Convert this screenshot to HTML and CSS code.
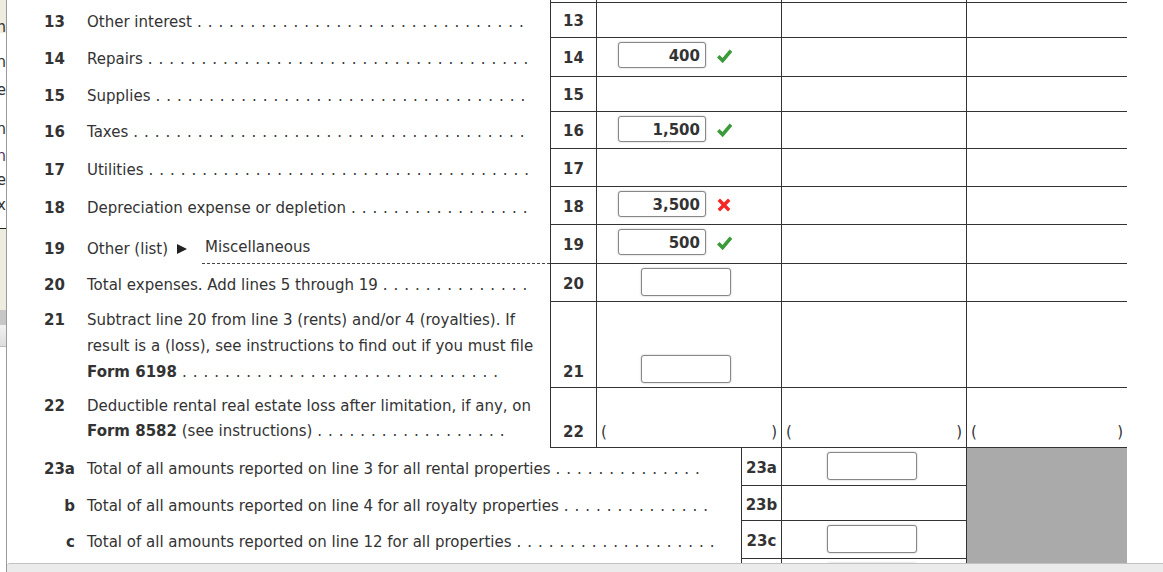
FILE: index.html
```html
<!DOCTYPE html>
<html lang="en">
<head>
<meta charset="utf-8">
<title>Schedule E - Expenses</title>
<link rel="stylesheet" href="styles.css">
</head>
<body>
<div class="page">
  <div class="strip">
    <div class="sb s-top"><div class="frag f0">h</div></div>
    <div class="sb s-white">
      <div class="frag f1">n</div>
      <div class="frag f2">e</div>
      <div class="frag f3">n</div>
      <div class="frag f4">n</div>
      <div class="frag f5">e</div>
      <div class="frag f6">x</div>
    </div>
    <div class="sb s-beige"></div>
    <div class="sb s-gray"></div>
    <div class="sb s-light"></div>
  </div>

  <div class="form">
    <div class="row h3">
      <div class="desc"></div>
      <div class="cell box"></div>
      <div class="cell amt"></div>
      <div class="cell amt"></div>
      <div class="cell last"></div>
    </div>

    <div class="row h35">
      <div class="desc"><span class="num">13</span><span class="txt">Other interest</span><span class="lead">. . . . . . . . . . . . . . . . . . . . . . . . . . . . . . .</span></div>
      <div class="cell box">13</div>
      <div class="cell amt"></div>
      <div class="cell amt"></div>
      <div class="cell last"></div>
    </div>

    <div class="row h39">
      <div class="desc"><span class="num">14</span><span class="txt">Repairs</span><span class="lead">. . . . . . . . . . . . . . . . . . . . . . . . . . . . . . . . . . . .</span></div>
      <div class="cell box">14</div>
      <div class="cell amt fill"><div class="grp"><input class="inp val" type="text" value="400" readonly><svg class="ic" width="15" height="14" viewBox="0 0 15 14"><path class="ok" d="M1.2 7.2 L5.6 11.6 L14 1.6"/></svg></div></div>
      <div class="cell amt"></div>
      <div class="cell last"></div>
    </div>

    <div class="row h35">
      <div class="desc"><span class="num">15</span><span class="txt">Supplies</span><span class="lead">. . . . . . . . . . . . . . . . . . . . . . . . . . . . . . . . . . .</span></div>
      <div class="cell box">15</div>
      <div class="cell amt"></div>
      <div class="cell amt"></div>
      <div class="cell last"></div>
    </div>

    <div class="row h37">
      <div class="desc"><span class="num">16</span><span class="txt">Taxes</span><span class="lead">. . . . . . . . . . . . . . . . . . . . . . . . . . . . . . . . . . . . .</span></div>
      <div class="cell box">16</div>
      <div class="cell amt fill"><div class="grp"><input class="inp val" type="text" value="1,500" readonly><svg class="ic" width="15" height="14" viewBox="0 0 15 14"><path class="ok" d="M1.2 7.2 L5.6 11.6 L14 1.6"/></svg></div></div>
      <div class="cell amt"></div>
      <div class="cell last"></div>
    </div>

    <div class="row h38">
      <div class="desc"><span class="num">17</span><span class="txt">Utilities</span><span class="lead">. . . . . . . . . . . . . . . . . . . . . . . . . . . . . . . . . . . .</span></div>
      <div class="cell box">17</div>
      <div class="cell amt"></div>
      <div class="cell amt"></div>
      <div class="cell last"></div>
    </div>

    <div class="row h38">
      <div class="desc"><span class="num">18</span><span class="txt">Depreciation expense or depletion</span><span class="lead">. . . . . . . . . . . . . . . . .</span></div>
      <div class="cell box">18</div>
      <div class="cell amt fill"><div class="grp"><input class="inp val" type="text" value="3,500" readonly><svg class="ic" width="15" height="14" viewBox="0 0 15 14"><path class="bad" d="M1.8 1.8 L12.2 12.2 M12.2 1.8 L1.8 12.2"/></svg></div></div>
      <div class="cell amt"></div>
      <div class="cell last"></div>
    </div>

    <div class="row h39">
      <div class="desc r19"><span class="num">19</span><span class="txt">Other (list)</span><svg class="tri" width="10" height="10" viewBox="0 0 10 10"><polygon points="0,0 10,5 0,10"/></svg><div class="misc">Miscellaneous</div></div>
      <div class="cell box">19</div>
      <div class="cell amt fill"><div class="grp"><input class="inp val" type="text" value="500" readonly><svg class="ic" width="15" height="14" viewBox="0 0 15 14"><path class="ok" d="M1.2 7.2 L5.6 11.6 L14 1.6"/></svg></div></div>
      <div class="cell amt"></div>
      <div class="cell last"></div>
    </div>

    <div class="row h38">
      <div class="desc"><span class="num">20</span><span class="txt">Total expenses. Add lines 5 through 19</span><span class="lead">. . . . . . . . . . . . . .</span></div>
      <div class="cell box">20</div>
      <div class="cell amt fill empty"><input class="inp blank" type="text" value="" readonly></div>
      <div class="cell amt"></div>
      <div class="cell last"></div>
    </div>

    <div class="row h86">
      <div class="desc multi m21"><span class="num">21</span>
        <div class="lines">
          <div class="ln">Subtract line 20 from line 3 (rents) and/or 4 (royalties). If</div>
          <div class="ln">result is a (loss), see instructions to find out if you must file</div>
          <div class="ln"><span class="txt b">Form 6198</span><span class="lead">. . . . . . . . . . . . . . . . . . . . . . . . . . . . . .</span></div>
        </div>
      </div>
      <div class="cell box bot">21</div>
      <div class="cell amt fill empty bottom"><input class="inp blank" type="text" value="" readonly></div>
      <div class="cell amt"></div>
      <div class="cell last"></div>
    </div>

    <div class="row h60">
      <div class="desc multi m22"><span class="num">22</span>
        <div class="lines">
          <div class="ln">Deductible rental real estate loss after limitation, if any, on</div>
          <div class="ln"><span class="txt"><b>Form 8582</b> (see instructions)</span><span class="lead">. . . . . . . . . . . . . . . . . .</span></div>
        </div>
      </div>
      <div class="cell box bot">22</div>
      <div class="cell amt paren"><span>(</span><span>)</span></div>
      <div class="cell amt paren"><span>(</span><span>)</span></div>
      <div class="cell last paren"><span>(</span><span>)</span></div>
    </div>

    <div class="row h38">
      <div class="desc wide"><span class="num">23a</span><span class="txt">Total of all amounts reported on line 3 for all rental properties</span><span class="lead">. . . . . . . . . . . . . .</span></div>
      <div class="cell box narrow">23a</div>
      <div class="cell amt fill empty colb"><input class="inp blank" type="text" value="" readonly></div>
      <div class="cell last gray"></div>
    </div>

    <div class="row h35">
      <div class="desc wide"><span class="num sub">b</span><span class="txt">Total of all amounts reported on line 4 for all royalty properties</span><span class="lead">. . . . . . . . . . . . . .</span></div>
      <div class="cell box narrow">23b</div>
      <div class="cell amt"></div>
      <div class="cell last gray"></div>
    </div>

    <div class="row h38">
      <div class="desc wide"><span class="num sub">c</span><span class="txt">Total of all amounts reported on line 12 for all properties</span><span class="lead">. . . . . . . . . . . . . . . . . . .</span></div>
      <div class="cell box narrow">23c</div>
      <div class="cell amt fill empty colb"><input class="inp blank" type="text" value="" readonly></div>
      <div class="cell last gray"></div>
    </div>

    <div class="row h40">
      <div class="desc wide"></div>
      <div class="cell box narrow"></div>
      <div class="cell amt fill empty colb"><input class="inp blank" type="text" value="" readonly></div>
      <div class="cell last gray"></div>
    </div>
  </div>
</div>
<div class="hscroll"></div>
</body>
</html>
```

FILE: styles.css
```css
html, body {
  margin: 0;
  padding: 0;
  overflow: hidden;
  background: #fff;
}
body {
  width: 1163px;
  height: 572px;
  font-family: "DejaVu Sans", Verdana, sans-serif;
  font-size: 15px;
  color: #333;
}
.page {
  display: flex;
  align-items: flex-start;
}

/* cut-off side panel */
.strip {
  flex: none;
  width: 6px;
  height: 572px;
  border-right: 1px solid #9a9a9a;
  overflow: hidden;
  display: flex;
  flex-direction: column;
}
.sb { flex: none; overflow: hidden; }
.s-top { height: 33px; background: #eeecdf; }
.s-white { height: 195px; background: #fff; }
.s-beige { height: 82px; box-sizing: border-box; border-top: 1px solid #222; background: #eeecdf; }
.s-gray { height: 15px; background: #c6c6c6; }
.s-light { height: 22px; box-sizing: border-box; background: linear-gradient(#f2f2f2, #dedede); border-bottom: 1px solid #bdbdbd; }
.frag {
  height: 24px;
  line-height: 24px;
  display: flex;
  justify-content: flex-end;
  white-space: nowrap;
  color: #333;
}
.f0 { margin-top: 15px; }
.f1 { margin-top: 17px; }
.f2 { margin-top: 4px; }
.f3 { margin-top: 15px; }
.f4 { margin-top: 3px; color: #5b3566; }
.f5 { margin-top: 0; }
.f6 { margin-top: 1px; }

/* form grid */
.form { flex: none; width: 1156px; }
.row { display: flex; }
.h3 { height: 3px; }
.h35 { height: 35px; }
.h37 { height: 37px; }
.h38 { height: 38px; }
.h39 { height: 39px; }
.h40 { height: 40px; }
.h60 { height: 60px; }
.h86 { height: 86px; }

.desc {
  flex: none;
  width: 543px;
  box-sizing: border-box;
  display: flex;
  align-items: center;
  padding: 3px 8px 0 37px;
  white-space: nowrap;
  line-height: 26px;
}
.desc.wide { width: 734px; padding-top: 4px; }

.num {
  flex: none;
  width: 31px;
  margin-right: 12px;
  font-weight: bold;
}
.num.sub { text-align: right; }
.txt { flex: none; }
.b { font-weight: bold; }
.lead {
  flex: none;
  margin-left: 5px;
  letter-spacing: 0.6px;
}

/* multi-line descriptions */
.desc.multi { align-items: flex-start; }
.m21 { padding-top: 5px; }
.m22 { padding-top: 6px; line-height: 25px; }
.lines { display: flex; flex-direction: column; }
.ln { display: flex; white-space: nowrap; }

/* line 19 */
.desc.r19 {
  align-items: stretch;
  padding: 8px 0 0 37px;
}
.r19 .num, .r19 .txt { align-self: center; }
.tri {
  align-self: center;
  flex: none;
  margin-left: 9px;
  fill: #222;
}
.misc {
  flex: 1;
  margin-left: 15px;
  display: flex;
  align-items: center;
  padding: 0 0 4px 3px;
  background-image: repeating-linear-gradient(90deg, #444 0 3px, transparent 3px 5px);
  background-size: 100% 1px;
  background-repeat: no-repeat;
  background-position: left bottom;
}

/* cells */
.cell {
  flex: none;
  box-sizing: border-box;
  border-left: 1px solid #333;
  border-bottom: 1px solid #333;
  display: flex;
}
.box {
  width: 46px;
  justify-content: center;
  align-items: center;
  padding-top: 2px;
  font-weight: bold;
  line-height: 26px;
}
.box.narrow { width: 40px; padding-top: 3px; }
.box.bot { align-items: flex-end; padding: 0 0 2px 0; }
.amt { width: 185px; }
.last { width: 161px; }
.gray { background: #aaa; border-bottom: none; }

.fill {
  align-items: flex-start;
  padding: 4px 0 0 21px;
}
.fill.empty { padding-left: 44px; }
.fill.colb { padding-left: 45px; }
.fill.bottom { align-items: flex-end; padding-top: 0; padding-bottom: 4px; }

.grp { display: flex; align-items: center; gap: 11px; }
.inp {
  box-sizing: border-box;
  margin: 0;
  border: 1px solid #878787;
  border-radius: 3px;
  box-shadow: 0 0 2px rgba(0, 0, 0, 0.28);
  background: #fff;
  font-family: "DejaVu Sans", Verdana, sans-serif;
  font-size: 15px;
  font-weight: bold;
  color: #333;
  text-align: right;
  padding: 1px 5px 0 5px;
  outline: none;
}
.inp.val { width: 88px; height: 26px; }
.inp.blank { width: 90px; height: 28px; }
.ic { flex: none; margin-top: 2px; }
.ic path { fill: none; stroke-width: 3.6; }
.ic .ok { stroke: #3b9b3b; }
.ic .bad { stroke: #f52626; stroke-width: 3.4; }

.paren {
  justify-content: space-between;
  align-items: flex-end;
  padding: 0 4px 2px 4px;
  line-height: 26px;
}

/* browser horizontal scrollbar track */
.hscroll {
  position: fixed;
  left: 7px;
  right: 0;
  bottom: 0;
  height: 8px;
  background: #ebebeb;
  border-top: 1px solid #c2c2c2;
  border-top-left-radius: 3px;
}
```
